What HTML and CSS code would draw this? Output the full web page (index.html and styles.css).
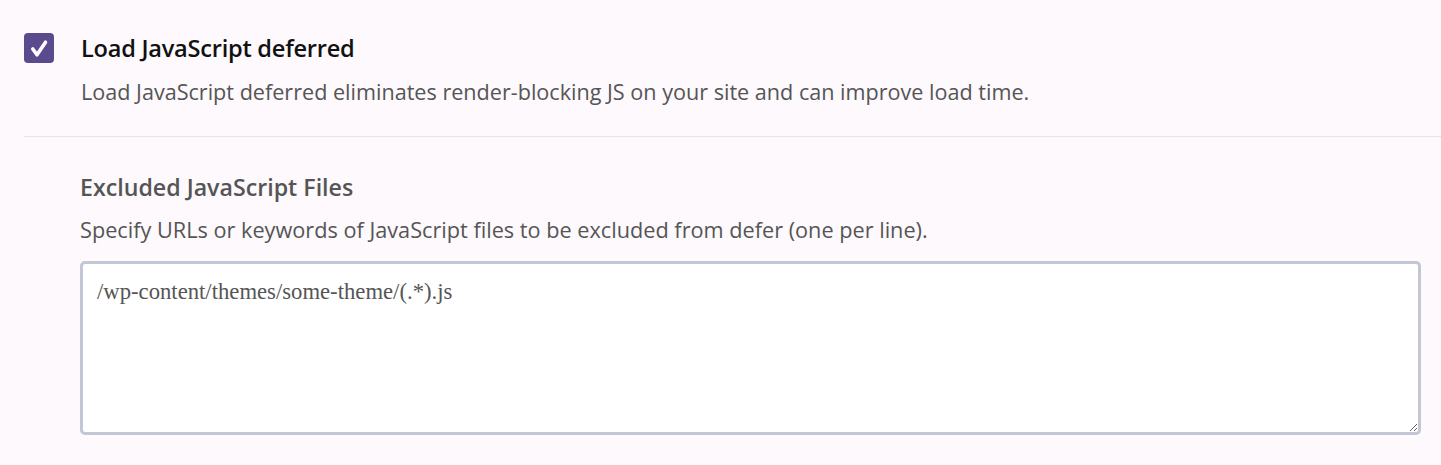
FILE: index.html
```html
<!DOCTYPE html>
<html>
<head>
<meta charset="utf-8">
<link rel="stylesheet" href="styles.css">
</head>
<body>
<div class="panel">
  <div class="option">
    <span class="check">
      <svg viewBox="0 0 30 30" width="30" height="30"><path d="M8.8 16 L13 21.8 L21.5 9.2" fill="none" stroke="#fff" stroke-width="3.6" stroke-linecap="round" stroke-linejoin="round"/></svg>
    </span>
    <div class="option-text">
      <div class="option-title">Load JavaScript deferred</div>
      <div class="option-desc">Load JavaScript deferred eliminates render-blocking JS on your site and can improve load time.</div>
    </div>
  </div>
  <div class="sub">
    <div class="sub-title">Excluded JavaScript Files</div>
    <div class="sub-desc">Specify URLs or keywords of JavaScript files to be excluded from defer (one per line).</div>
    <textarea class="field">/wp-content/themes/some-theme/(.*).js</textarea>
  </div>
</div>
</body>
</html>
```
FILE: styles.css
```css
html, body {
  margin: 0;
  padding: 0;
  background: #fdf9fd;
  height: 100%;
}
body {
  font-family: "Open Sans", "Noto Sans", sans-serif;
  overflow: hidden;
}
.panel {
  padding: 33px 0 0 24px;
}
.option {
  display: flex;
  gap: 27px;
  align-items: flex-start;
  padding-bottom: 30px;
  border-bottom: 1px solid #e6e3ee;
}
.check {
  width: 30px;
  height: 30px;
  flex: none;
  background: #5b4a8e;
  border-radius: 4px;
  display: block;
}
.check svg {
  display: block;
}
.option-title {
  font-size: 23.6px;
  font-weight: 600;
  color: #111;
  line-height: 30px;
  letter-spacing: -0.25px;
}
.option-desc {
  margin-top: 15px;
  font-size: 21.6px;
  color: #555;
  line-height: 28px;
}
.sub {
  padding: 35px 20px 0 56px;
}
.sub-title {
  font-size: 23.2px;
  font-weight: 600;
  color: #555;
  line-height: 30px;
}
.sub-desc {
  margin-top: 14px;
  font-size: 21.7px;
  color: #555;
  line-height: 28px;
}
.field {
  display: block;
  box-sizing: border-box;
  width: 100%;
  height: 174px;
  margin-top: 17px;
  border: 3px solid #c3c6d4;
  border-radius: 5px;
  background: #fff;
  padding: 14px 14px;
  font-family: "Liberation Serif", serif;
  font-size: 22.7px;
  color: #555;
  line-height: 28px;
  resize: vertical;
  outline: none;
}
```
